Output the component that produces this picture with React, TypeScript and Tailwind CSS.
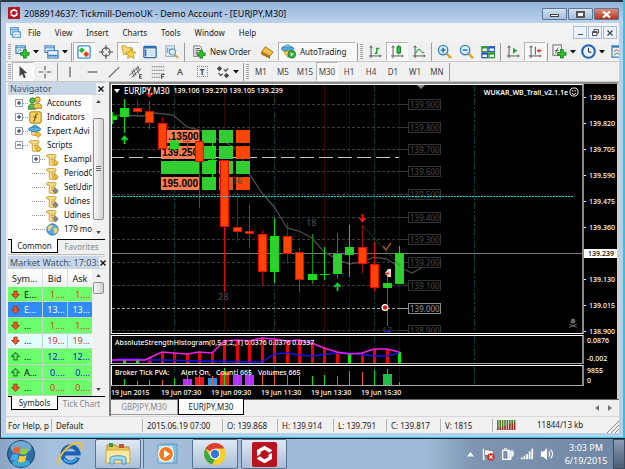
import React from "react";

type Kids = { children?: React.ReactNode };

/* ---------- icons ---------- */

function Ico({ children, size = 14 }: Kids & { size?: number }) {
  return (
    <svg width={size} height={size} viewBox="0 0 16 16" fill="none" className="shrink-0" aria-hidden="true">
      {children}
    </svg>
  );
}

const GreenPlus = ({ x, y }: { x: number; y: number }) => (
  <path d={`M${x + 3} ${y}h3v3h3v3h-3v3h-3v-3h-3v-3h3z`} fill="#2fc42f" stroke="#0c7d12" strokeWidth=".9" />
);

const NewChart = () => (
  <Ico size={15}><rect x="1" y="2" width="10" height="8" fill="#dff0fb" stroke="#3c86b8" strokeWidth="1.3" /><path d="M1 4h10M3 8l2-2 2 1" stroke="#3c86b8" /><GreenPlus x={6} y={6} /></Ico>
);
const Profiles = () => (
  <Ico size={15}><rect x="1" y="2" width="10" height="7" fill="#dbeafa" stroke="#4a83c0" strokeWidth="1.2" /><path d="M1 4h10" stroke="#4a83c0" /><rect x="4" y="7" width="11" height="8" fill="#e9f3fd" stroke="#4a83c0" strokeWidth="1.2" /><path d="M4 12.500h11" stroke="#4a83c0" strokeWidth="2" /></Ico>
);
const WatchIcon = () => (
  <Ico><rect x="1" y="1" width="14" height="14" rx="1.500" fill="#fff" stroke="#3f8fd0" strokeWidth="1.500" /><path d="M5.500 2.500L9 6 5.500 9.500 2 6z" fill="#2db533" /><path d="M10.500 7l3.500 3.500-3.500 3.500L7 10.500z" fill="#e2401f" /></Ico>
);
const Target = () => (
  <Ico><circle cx="8" cy="8" r="4.700" stroke="#555" strokeWidth="1.300" /><path d="M8 0v6M8 10v6M0 8h6M10 8h6" stroke="#555" strokeWidth="1.300" /></Ico>
);
const StarFolder = () => (
  <Ico size={15}><path d="M1 4V2h4l1 2h6v7H3z" fill="#f8db79" stroke="#c19a2b" /><path d="M10.500 5l1.700 3.500 3.800.4-2.800 2.600.8 3.800-3.500-1.900L7 15.300l.8-3.800L5 8.900l3.800-.4z" fill="#fcd53c" stroke="#b98d14" strokeWidth=".8" /></Ico>
);
const DataWin = () => (
  <Ico><rect x="1" y="1.500" width="14" height="13" rx="1" fill="#eaf4fe" stroke="#2b6fb5" strokeWidth="1.500" /><path d="M1 2h14v2H1z" fill="#2b6fb5" /><path d="M3 5v8" stroke="#3678c6" strokeWidth="2" /><path d="M6 6.500h7M6 9h7M6 11.500h7" stroke="#a9c7e4" /></Ico>
);
const Tester = () => (
  <Ico><rect x="1" y="1" width="10" height="12" fill="#eaf2fb" stroke="#7ba3cc" /><path d="M3 3v6M5 4v5M8 3v4" stroke="#5183b5" /><circle cx="8.500" cy="8" r="3.500" fill="#d8ecfa" stroke="#5c8fbd" strokeWidth="1.200" /><path d="M11 11l4 4" stroke="#d8a334" strokeWidth="2.200" /></Ico>
);
const OrderIcon = () => (
  <Ico><path d="M2 1h7l2 2v10H2z" fill="#f1f1f1" stroke="#6b6b6b" /><path d="M4 4h5M4 6h5M4 8h3M4 10h2" stroke="#555" /><GreenPlus x={6} y={6} /></Ico>
);
const Book = () => (
  <Ico><path d="M6 2l9 6-4 5-9-5z" fill="#eebf45" stroke="#a36d12" /><path d="M2 8l9 5v2L2 10.500z" fill="#c68a1e" stroke="#92620f" /></Ico>
);
const AutoIcon = () => (
  <Ico size={15}><ellipse cx="7" cy="5" rx="6.500" ry="2.600" fill="#55b2e6" stroke="#2572a8" /><path d="M3 4c1-4 7-4 8 0z" fill="#7cc6ef" stroke="#2572a8" strokeWidth=".8" /><path d="M3 8l4 6 5-3-1-4z" fill="#f4cc4f" stroke="#b5871b" strokeWidth=".8" /><circle cx="11.500" cy="11" r="4" fill="#37b53b" stroke="#167a1d" /><path d="M10.300 9v4l3.200-2z" fill="#fff" /></Ico>
);
const Axes = () => <path d="M3.500 1v14M1 12.500h14M2 3l1.500-2L5 3M13.500 11l1.500 1.500-1.500 1.500" stroke="#555" strokeWidth="1.100" />;
const BarsIcon = () => <Ico><Axes /><path d="M10 3v7M10 4h3M7.500 9.500H10" stroke="#1c9a28" strokeWidth="1.500" /></Ico>;
const CandleIcon = () => <Ico><Axes /><path d="M10 0v11" stroke="#118a1c" strokeWidth="1.200" /><rect x="8" y="2" width="4" height="7" fill="#2cc63a" stroke="#0c7a18" /></Ico>;
const LineIcon = () => <Ico><Axes /><path d="M4 10c2-6 5-6 6-3 1 2 3 2 4 2" stroke="#31a23b" strokeWidth="1.200" /></Ico>;
const Lens = ({ plus }: { plus?: boolean }) => (
  <Ico size={15}><path d="M10 10l5 5" stroke="#dba62f" strokeWidth="2.800" /><circle cx="6.500" cy="6.500" r="5" fill="#d9effc" stroke="#3a86c0" strokeWidth="1.500" /><path d={plus ? "M4 6.500h5M6.500 4v5" : "M4 6.500h5"} stroke="#24659a" strokeWidth="1.500" /></Ico>
);
const Tile = () => (
  <Ico><rect x="1" y="2" width="6.500" height="5.500" fill="#fff" stroke="#2b9a32" strokeWidth="1.500" /><rect x="9" y="2" width="6.500" height="5.500" fill="#fff" stroke="#2b58c8" strokeWidth="1.500" /><rect x="1" y="9" width="6.500" height="5.500" fill="#fff" stroke="#2b58c8" strokeWidth="1.500" /><rect x="9" y="9" width="6.500" height="5.500" fill="#fff" stroke="#2b9a32" strokeWidth="1.500" /><path d="M1 3h6.500M9 10h6.500" stroke="#2b9a32" strokeWidth="2" /><path d="M9 3h6.500M1 10h6.500" stroke="#2b58c8" strokeWidth="2" /></Ico>
);
const ScrollIcon = () => <Ico><Axes /><path d="M8 3v7l5-3.500z" fill="#25a52f" /></Ico>;
const ShiftIcon = () => <Ico><Axes /><path d="M8.500 2v9" stroke="#3679b8" strokeWidth="1.400" /><path d="M10 6.500L13 4v1.700h2.500v1.600H13V9z" fill="#d0401f" /></Ico>;
const IndIcon = () => <Ico size={15}><rect x="1" y="1" width="9" height="11" fill="#f3f3f3" stroke="#666" /><path d="M3 10c2 0 2-6 4-6M3 7h4" stroke="#555" /><GreenPlus x={6} y={6} /></Ico>;
const ClockIcon = () => <Ico size={15}><circle cx="8" cy="8" r="6.700" fill="#e7f3fd" stroke="#2766b4" strokeWidth="2.300" /><path d="M8 4v4.300l3 .7" stroke="#333" strokeWidth="1.200" /></Ico>;
const TplIcon = () => <Ico size={15}><rect x="1" y="2" width="13" height="12" fill="#eaf4fe" stroke="#3b80c0" strokeWidth="1.300" /><path d="M1 3h13" stroke="#3b80c0" strokeWidth="2" /><path d="M3 8l3-2 3 2" stroke="#c33" /><path d="M3 12l3-2 3 1" stroke="#292" /></Ico>;

const CursorIcon = () => <Ico><path d="M4 1v12l3-2.700 2 4.700 2.200-1-2-4.500H13z" fill="#444" /></Ico>;
const CrossIcon = () => <Ico><path d="M8 1v5M8 10v5M1 8h5M10 8h5" stroke="#555" strokeWidth="1.300" /><path d="M7.500 8h1" stroke="#555" /></Ico>;
const VLine = () => <Ico><path d="M8 2v12" stroke="#555" strokeWidth="1.300" /></Ico>;
const HLine = () => <Ico><path d="M3 8h11" stroke="#555" strokeWidth="1.300" /></Ico>;
const TLine = () => <Ico><path d="M2 14L14 2.500" stroke="#666" strokeWidth="1.300" /></Ico>;
const Channel = () => <Ico><path d="M0 12L11 2M3 14L14 4M3 6l3 8M5 4l3 8M8 3l3 7M10 1l2 6" stroke="#444" strokeWidth=".9" /><path d="M15 11h-3v4h3M12 13h2" stroke="#333" /></Ico>;
const Fibo = () => <Ico><path d="M1 2h14M1 6h14M1 10h14M1 14h9" stroke="#666" strokeWidth="1.200" strokeDasharray="1.500 1" /><path d="M12 16v-5h3.500M12 13.500h3" stroke="#333" /></Ico>;
const LetterA = () => <span className="text-[9px] font-semibold leading-none text-[#555]">A</span>;
const LetterT = () => <span className="flex h-[11px] w-[11px] items-center justify-center border border-dotted border-[#888] text-[8px] font-bold leading-none text-[#444]">T</span>;
const ArrowsIcon = () => <Ico><path d="M4 1l3 3-3 3-3-3zM12 9l3 3-3 3-3-3z" fill="#444" /><path d="M9 5l2 2 3-3M3 9l2 3 3-2" stroke="#444" strokeWidth="1.300" /></Ico>;

const Drop = () => <svg width="6" height="4" viewBox="0 0 6 4" aria-hidden="true"><path d="M0 0h6L3 3.500z" fill="#111" /></svg>;

/* ---------- toolbar parts ---------- */

const Grip = () => <span className="mx-[1px] h-[16px] w-[3px] shrink-0 bg-[repeating-linear-gradient(#a5a5a5_0_1px,#efefef_1px_2px)]" />;
const Sep = () => <span className="mx-[1px] h-[18px] w-px shrink-0 bg-[#9c9c9c]" />;

function Tool({ label, on, drop, children }: Kids & { label: string; on?: boolean; drop?: boolean }) {
  return (
    <button
      type="button"
      aria-label={label}
      className={`flex h-[19px] shrink-0 items-center justify-center gap-[3px] ${drop ? "w-[29px]" : "w-[22px]"} ${on ? "border border-[#b4b4b4] border-r-white border-b-white bg-[#f8f8f8]" : ""}`}
    >
      {children}
      {drop && <Drop />}
    </button>
  );
}

/* ---------- navigator ---------- */

const Scroll = ({ gray }: { gray?: boolean }) => (
  <Ico size={13}><path d="M2 2h9c2 0 2 3 0 3v8h3c0 2-1 2-2 2H5c-1 0-1-1-1-2V5H2C0 5 0 2 2 2z" fill="#fbe391" stroke="#b88b1f" /><path d="M6 6h4M6 8h4M6 10h3" stroke="#c69d3b" /><path d="M11.500 8.500L15 12l-3.500 3.500L8 12z" fill={gray ? "#8a8a8a" : "#f1bd2c"} stroke={gray ? "#5c5c5c" : "#a87912"} strokeWidth=".8" /></Ico>
);
const Accounts = () => (
  <Ico size={14}><circle cx="5" cy="5" r="3" fill="#58bd4d" stroke="#22791f" /><path d="M0 15c0-8 9-8 9 0z" fill="#58bd4d" stroke="#22791f" /><circle cx="11" cy="4" r="3" fill="#f2c64d" stroke="#9c741b" /><path d="M6 14c0-8 10-8 10 0z" fill="#f2c64d" stroke="#9c741b" /></Ico>
);
const Indicators = () => (
  <Ico size={13}><rect x="1" y="1" width="14" height="14" rx="2" fill="#f4d467" stroke="#b58d20" strokeWidth="1.400" /><path d="M11 4c-3-1-3 1-3.500 4S7 13 5 12M5.500 7.500h4.500" stroke="#6b4d06" strokeWidth="1.300" /></Ico>
);
const Expert = () => (
  <Ico size={14}><path d="M4 5c1-5 7-5 8 0z" fill="#7cc6ef" stroke="#2572a8" /><ellipse cx="7.500" cy="6" rx="7" ry="2.500" fill="#55b2e6" stroke="#2572a8" /><path d="M4 9h6v2c0 3-6 3-6 0z" fill="#f6d9a6" stroke="#a97d36" strokeWidth=".8" /><path d="M11.500 8.500L15 12l-3.500 3.500L8 12z" fill="#f1bd2c" stroke="#a87912" strokeWidth=".8" /></Ico>
);
const Globe = () => (
  <Ico size={13}><circle cx="8" cy="8" r="7" fill="#54a7ea" stroke="#2868a8" /><path d="M3 4c3-3 6-1 5 1S5 7 5 9s-3 0-3-2zM10 6c3-1 5 1 4 4s-4 4-4 1-2-3 0-5z" fill="#f3d569" /></Ico>
);

const tree: { label: string; icon: React.ReactNode; deep?: boolean; box?: string }[] = [
  { label: "Accounts", icon: <Accounts />, box: "+" },
  { label: "Indicators", icon: <Indicators />, box: "+" },
  { label: "Expert Advi", icon: <Expert />, box: "+" },
  { label: "Scripts", icon: <Scroll />, box: "-" },
  { label: "Exampl", icon: <Scroll />, deep: true, box: "+" },
  { label: "PeriodC", icon: <Scroll />, deep: true },
  { label: "SetUdin", icon: <Scroll gray />, deep: true },
  { label: "Udines", icon: <Scroll gray />, deep: true },
  { label: "Udines", icon: <Scroll gray />, deep: true },
  { label: "179 mo", icon: <Globe />, deep: true },
];

function PanelHead({ title }: { title: string }) {
  return (
    <div className="flex h-[13px] items-center justify-between bg-[#c9d6e6] pl-[2px] text-[9px] leading-[12px] text-[#46566e]">
      <h2 className="whitespace-nowrap">{title}</h2>
      <button type="button" aria-label={`Close ${title}`} className="flex h-[11px] w-[9px] shrink-0 items-center justify-center bg-[#f0f0f0]">
        <svg width="6" height="6" viewBox="0 0 6 6"><path d="M.5.5l5 5M5.500.5l-5 5" stroke="#111" strokeWidth="1.400" /></svg>
      </button>
    </div>
  );
}

function PanelTabs({ on, off }: { on: string; off: string }) {
  return (
    <div className="flex h-[15px] shrink-0 border-t border-black pl-[3px] text-[8px] leading-none">
      <button type="button" className="-mt-px h-[14px] w-[47px] border border-t-0 border-black bg-white text-[#222]">{on}</button>
      <button type="button" className="h-[13px] flex-1 whitespace-nowrap text-[#868686]">{off}</button>
    </div>
  );
}

function ScrollBar({ long }: { long?: boolean }) {
  return (
    <div className="flex w-[13px] shrink-0 flex-col items-center bg-[#f1f1f1]">
      <span className="flex h-[13px] items-center"><svg width="5" height="3" viewBox="0 0 6 4"><path d="M0 4h6L3 0z" fill="#444" /></svg></span>
      <span className={`flex w-[11px] items-center justify-center rounded-[2px] border border-[#8f8f8f] bg-gradient-to-r from-[#f7f7f7] to-[#d2d2d2] ${long ? "mt-[10px] h-[102px]" : "h-[12px]"}`}>
        {long && <span className="h-[6px] w-[5px] bg-[repeating-linear-gradient(#666_0_1px,#eee_1px_2px)]" />}
      </span>
      <span className="flex-1" />
      <span className="flex h-[13px] items-center"><svg width="5" height="3" viewBox="0 0 6 4"><path d="M0 0h6L3 4z" fill="#444" /></svg></span>
    </div>
  );
}

function Navigator() {
  return (
    <section className="flex flex-col border-b border-[#bdbdbd] bg-[#f0f0f0]">
      <PanelHead title="Navigator" />
      <div className="flex h-[144px] bg-white">
        <ul className="min-w-0 flex-1 overflow-hidden pl-[7px] pt-[1px] text-[8px] text-[#111]">
          {tree.map((n, i) => (
            <li key={i} className={`flex h-[14px] items-center whitespace-nowrap ${n.deep ? "pl-[17px]" : ""}`}>
              <span className="flex w-[13px] shrink-0 items-center">
                {n.box && (
                  <svg width="8" height="8" viewBox="0 0 8 8" fill="none" className="shrink-0">
                    <path d="M.5.5h7v7h-7z" fill="#fff" stroke="#8e9bb5" />
                    <path d={n.box === "+" ? "M2 4h4M4 2v4" : "M2 4h4"} stroke="#224" />
                  </svg>
                )}
                <span className="h-px flex-1 border-t border-dotted border-[#999]" />
              </span>
              <span className="flex w-[14px] shrink-0 justify-center">{n.icon}</span>
              <span className="ml-[5px]">{n.label}</span>
            </li>
          ))}
        </ul>
        <ScrollBar long />
      </div>
      <PanelTabs on="Common" off="Favorites" />
    </section>
  );
}

const quotes = [
  { s: "E...", b: "1....", up: false, row: "bg-[#6cff6c]", num: "text-[#e02a10]" },
  { s: "E...", b: "13...", up: false, row: "bg-[#2f8bf5] text-white", num: "text-white" },
  { s: "...", b: "1....", up: false, row: "bg-[#6cff6c]", num: "text-[#e02a10]" },
  { s: "...", b: "19...", up: false, row: "bg-[#e2ffff]", num: "text-[#e02a30]" },
  { s: "...", b: "12...", up: true, row: "bg-[#6cff6c]", num: "text-[#1414d8]" },
  { s: "A...", b: "0....", up: true, row: "bg-[#6cff6c]", num: "text-[#1414d8]" },
  { s: "...", b: "0....", up: false, row: "bg-[#6cff6c]", num: "text-[#e02a10]" },
];

function MarketWatch() {
  return (
    <section className="mt-[1px] flex min-h-0 flex-1 flex-col bg-[#f0f0f0]">
      <PanelHead title="Market Watch: 17:03:" />
      <div className="flex h-[127px] bg-white">
        <table className="h-full min-w-0 flex-1 table-fixed border-collapse text-[9px] leading-none">
          <thead>
            <tr className="h-[18px] bg-gradient-to-b from-white to-[#f1f1f1] text-[#222]">
              <th className="w-[34px] border-r border-[#ddd] pl-[4px] text-left font-normal">Sym...</th>
              <th className="border-r border-[#ddd] font-normal">Bid</th>
              <th className="font-normal">Ask</th>
            </tr>
          </thead>
          <tbody>
            {quotes.map((q, i) => (
              <tr key={i} className={`border-b border-[#bfd8bf] ${q.row}`}>
                <td className="border-r border-[#bfd8bf] pl-[3px]">
                  <span className="flex items-center gap-[4px]">
                    <Ico size={9}>
                      {q.up
                        ? <path d="M8 1l7 7h-4v6H5V8H1z" fill="#7de37d" stroke="#128a1c" strokeWidth="2" />
                        : <path d="M8 15L1 8h4V2h6v6h4z" fill="#ef5b2b" stroke="#a32a0c" strokeWidth="1.500" />}
                    </Ico>
                    {q.s}
                  </span>
                </td>
                <td className={`border-r border-[#bfd8bf] pr-[2px] text-right ${q.num}`}>{q.b}</td>
                <td className={`pr-[2px] text-right ${q.num}`}>{q.b}</td>
              </tr>
            ))}
          </tbody>
        </table>
        <ScrollBar />
      </div>
      <PanelTabs on="Symbols" off="Tick Chart" />
    </section>
  );
}

/* ---------- chart ---------- */

const GREEN = "#32cd32";
const LIME = "#00e600";
const ORANGE = "#ff4500";

/* centre x, wick top, wick bottom, body top, body bottom, rising, muted wick */
const candles: [number, number, number, number, number, boolean, boolean?][] = [
  [112, 112, 124, 116, 120, true],
  [124, 99, 133, 108, 117, true],
  [137, 99, 117, 108, 112, false, true],
  [149, 101, 129, 111, 123, false],
  [162, 117, 150, 123, 149, false, true],
  [174, 140, 150, 141, 149, true],
  [199, 130, 208, 141, 162, false],
  [212, 143, 180, 160, 161, true],
  [224, 160, 292, 160, 227, false],
  [237, 193, 241, 227, 232, false, true],
  [249, 205, 248, 231, 234, false],
  [262, 230, 285, 234, 272, false, true],
  [274, 218, 283, 236, 272, true],
  [287, 223, 262, 236, 254, false, true],
  [299, 248, 292, 252, 280, false],
  [312, 234, 284, 274, 280, true, true],
  [324, 247, 280, 274, 275, true],
  [337, 233, 279, 254, 274, true, true],
  [349, 225, 277, 247, 255, true],
  [362, 225, 273, 247, 264, false, true],
  [374, 242, 292, 264, 288, false],
  [387, 270, 326, 283, 288, true, true],
  [399, 246, 284, 253, 284, true],
];

const levels: [number, string][] = [
  [104, "139.900"], [127, "139.800"], [149, "139.700"], [171, "139.600"], [194, "139.500"],
  [217, "139.400"], [239, "139.300"], [262, "139.200"], [285, "139.100"], [308, "139.000"], [330, "138.900"],
];

const cellRows = [130, 146, 161, 177];
const cells: [number, number, string][] = [
  [0, 0, GREEN], [0, 1, GREEN], [0, 2, GREEN], [0, 3, GREEN],
  [1, 0, GREEN], [1, 1, GREEN], [1, 2, GREEN], [1, 3, "#c8641c"],
  [2, 0, ORANGE], [2, 1, ORANGE], [2, 2, GREEN], [2, 3, ORANGE],
];

function Grid({ top, bottom }: { top: number; bottom: number }) {
  return (
    <g shapeRendering="crispEdges">
      {[199, 224, 249, 299, 324, 349, 399].map((x) => <path key={x} d={`M${x}.5 ${top}V${bottom}`} stroke="#340505" />)}
      {[174, 274, 374, 474].map((x) => <path key={x} d={`M${x}.5 ${top}V${bottom}`} stroke="#073b3b" strokeDasharray="7 2 2 2" />)}
    </g>
  );
}

const upArrow = (x: number, y: number) => <path d={`M${x} ${y + 8}V${y}M${x - 3} ${y + 4}l3-3.500 3 3.500`} stroke="#00e632" strokeWidth="1.700" />;
const downArrow = (x: number, y: number) => <path d={`M${x} ${y}v8M${x - 3} ${y + 4}l3 3.500 3-3.500`} stroke="#f01818" strokeWidth="1.700" />;

function PricePlot() {
  return (
    <svg className="block h-full w-full" fill="none" role="img" aria-label="EURJPY M30 candlesticks">
      <g transform="translate(-112 -85)">
        <Grid top={85} bottom={332} />
        <g shapeRendering="crispEdges">
          {levels.map(([y]) => (
            <g key={y}>
              <path d={`M112 ${y}.5H399`} stroke={y === 308 ? "#9a9a9a" : "#3c3c3c"} strokeDasharray="3 2" />
              <path d={`M399 ${y}.5H408`} stroke={y === 308 ? "#9a9a9a" : "#333"} />
            </g>
          ))}
          <path d="M110 157.500H399" stroke="#c8c8c8" strokeDasharray="14 5" />
          <path d="M112 253.500H3000" stroke="#77777f" />
        </g>
        <path d="M417 85h8l-4 4z" fill="#8a8a8a" />
        <path d="M112 115L143 116 155 113 173 115 187 127 199 130 212 137 225 142 238 150 250 175 262 193 275 208 287 228 299 231 312 238 324 252 337 259 349 264 362 262 374 257 387 259 399 267 412 273 423 267" stroke="#4c4c4c" strokeWidth="1.300" />

        <g fontFamily="Liberation Sans, Arial, sans-serif" fontWeight="700" fontSize="10">
          {cellRows.map((y, r) => (
            <rect key={y} x="161" y={y} width="38" height="13" fill={r === 2 ? GREEN : "#ff7f50"} />
          ))}
          <text x="168" y="140" fill="#000">.13500</text>
          <text x="162" y="156" fill="#000">139.250</text>
          <text x="162" y="187" fill="#000">195.000</text>
          {cells.map(([c, r, f]) => (
            <rect key={`${c}${r}`} x={202 + c * 17} y={cellRows[r]} width="14" height="13" fill={f} />
          ))}
        </g>
        <path d="M187.500 137v14M183 141.500h8" stroke="#d23a12" />

        <g shapeRendering="crispEdges">
          {candles.map(([x, wt, wb, t, b, up, muted]) => (
            <g key={x}>
              <rect x={x} y={wt} width="1" height={wb - wt} fill={up ? (muted ? "#079607" : LIME) : muted ? "#a00808" : "#e60a0a"} />
              <rect x={x - 4} y={t} width="9" height={b - t} fill={up ? LIME : "#e60a0a"} />
              {b - t > 2 && <rect x={x - 3} y={t + 1} width="7" height={b - t - 2} fill={up ? GREEN : ORANGE} />}
            </g>
          ))}
        </g>

        {downArrow(149.5, 89)}
        {upArrow(124.5, 136)}
        {downArrow(362.5, 214)}
        {upArrow(337.5, 283)}
        <path d="M363 226L400 266" stroke="#116a18" strokeDasharray="2 1" />
        <path d="M383 246l3 4 5-7" stroke="#a9521c" strokeWidth="1.300" />
        <path d="M391 269v8h-3l-3-4 3-4z" fill="#f2ddc2" /><path d="M385 273.500h4" stroke="#e33" strokeWidth="2" />
        <circle cx="385" cy="307.500" r="3.500" fill="#fff" /><circle cx="385" cy="307.500" r="2.200" fill="#e01818" />
        <path d="M384 331.500h7" stroke="#1717c8" strokeWidth="2" />

        <g fontFamily="Noto Sans, sans-serif" fontSize="9" fill="#4a4a4a">
          <text x="232" y="184">16</text>
          <text x="218" y="300">28</text>
          <text x="306" y="226">18</text>
          <text x="382" y="334" fill="#333">17</text>
        </g>
        <g fontFamily="Noto Sans, sans-serif" fontSize="8">
          {levels.map(([y, t]) => (
            <g key={t}>
              <rect x="408.500" y={y - 4.5} width="32" height="10" fill="#000" stroke={y === 308 ? "#8a8a8a" : "#333"} />
              <text x="410" y={y + 4} fill={y === 308 ? "#8a8a8a" : "#404040"}>{t}</text>
            </g>
          ))}
        </g>
        <path d="M112 196.500H574" stroke="#00dce6" strokeDasharray="2 1" shapeRendering="crispEdges" />
      </g>
    </svg>
  );
}

const strength = [359, 359, 357, 351, 352, 353, 351, 352, 340, 339, 340, 337, 338, 340, 339, 342, 347, 351, 353, 352, 348, 348, 351];

function StrengthPlot() {
  return (
    <svg className="block h-full w-full" fill="none" role="img" aria-label="Absolute strength histogram">
      <g transform="translate(-112 -335)">
        <Grid top={335} bottom={362} />
        <g shapeRendering="crispEdges">
          {strength.map((y, i) => (
            <rect key={i} x={123 + Math.round(i * 12.5)} y={y} width="3" height={362 - y} fill={[0, 1, 18, 22].includes(i) ? "#00f000" : "#f00000"} />
          ))}
        </g>
        <path d="M112 360L118 358 137 358 149 359 162 359 199 360 262 361 274 353 287 352 299 354 312 355 337 352 349 352 374 355 387 355 399 352" stroke="#1414f0" strokeWidth="1.500" />
        <path d="M112 359H145L149 357 162 351 174 352 187 353 199 351 212 352 224 340 237 339 249 340 262 337 274 338 287 340 299 339 312 342 324 347 337 351 349 353 362 352 374 348 387 348 399 351" stroke="#f020e8" strokeWidth="1.600" />
        <text x="115" y="344" fontFamily="Noto Sans, sans-serif" fontSize="7" fontWeight="500" fill="#fff">AbsoluteStrengthHistogram(0,5,3,2,,1) 0.0376 0.0376 0.0337</text>
      </g>
    </svg>
  );
}

const VIOLET = "#b030ff";
/* top of the thin bar, rising, then top and colour of the wide bar */
const volumes: [number, boolean, number?, string?][] = [
  [378, true], [380, false], [379, true], [379, false], [377, true],
  [374, true, 378, VIOLET], [374, false, 376, "#f01414"], [375, false, 377, "#1e90ff"], [367, true, 371, "#f01414"],
  [368, false, 374, VIOLET], [368, false, 374, VIOLET], [372, false], [370, false], [374, false], [375, false],
  [375, true], [374, true], [375, false], [370, true], [371, false], [369, true], [368, true, 373, "#22b84a"], [381, false],
];

function VolumePlot() {
  return (
    <svg className="block h-full w-full" fill="none" role="img" aria-label="Tick volumes">
      <g transform="translate(-112 -365)">
        <Grid top={365} bottom={384} />
        <g shapeRendering="crispEdges">
          {volumes.map(([y, up, wy, wf], i) => {
            const x = 124 + Math.round(i * 12.5);
            return (
              <g key={i}>
                {wy && <rect x={x - 4} y={wy} width="9" height={384 - wy} fill={wf} />}
                <rect x={x} y={y} width="1" height={384 - y} fill={up ? LIME : "#f05a10"} />
              </g>
            );
          })}
        </g>
        <g fontFamily="Noto Sans, sans-serif" fontSize="7" fontWeight="500" fill="#fff">
          <text x="115" y="374">Broker Tick PVA:</text>
          <text x="181" y="374">Alert On,</text>
          <text x="216" y="374">Count: 665</text>
          <text x="258" y="374">Volumes 665</text>
        </g>
      </g>
    </svg>
  );
}

const prices = ["139.935", "139.820", "139.705", "139.590", "139.475", "139.360", "139.239", "139.130", "139.015", "138.900"];
const times = ["19 Jun 2015", "19 Jun 07:30", "19 Jun 09:30", "19 Jun 11:30", "19 Jun 13:30", "19 Jun 15:30"];

function Chart() {
  return (
    <div className="flex flex-1 flex-col bg-black text-[7px] font-medium leading-none text-white">
      <div className="flex h-[249px] flex-1">
        <div className="relative min-w-0 flex-1 border-t border-r-2 border-b border-l border-white border-r-[#8a8a8a]">
          <div className="absolute inset-0"><PricePlot /></div>
          <div className="absolute left-[2px] top-[1px] flex items-center gap-[4px] text-[8px] leading-[10px]">
            <svg width="6" height="4" viewBox="0 0 6 4"><path d="M0 0h6L3 4z" fill="#fff" /></svg>
            <span>EURJPY,M30</span>
            <span className="whitespace-pre text-[7px]">139.106 139.270 139.105 139.239</span>
          </div>
          <div className="absolute right-[3px] top-[2px] flex items-center gap-[1px] font-semibold leading-[9px]">
            <span>WUKAR_WB_Trail_v2.1.1e</span>
            <Ico size={10}><circle cx="8" cy="8" r="6.500" stroke="#fff" strokeWidth="1.500" /><path d="M4.500 9.500c2 3 5 3 7 0" stroke="#fff" strokeWidth="1.500" /><path d="M6 5v2M10 5v2" stroke="#fff" strokeWidth="1.800" /></Ico>
          </div>
          <div className="absolute bottom-[5px] right-[4px]">
            <Ico size={10}><circle cx="8" cy="5" r="3.700" fill="#777" /><path d="M7 5h-1M10 5h-1" stroke="#111" strokeWidth="1.600" /><path d="M2 10l12 5M14 10L2 15" stroke="#777" strokeWidth="1.500" /></Ico>
          </div>
        </div>
        <ol className="h-0 w-[33px] shrink-0">
          {prices.map((p) => (
            <li key={p} className="flex h-[26px] items-center">
              {p === "139.239"
                ? <span className="w-full bg-white py-[1px] pl-[4px] text-black">{p}</span>
                : <><span className="mr-[3px] h-px w-[2px] bg-white" />{p}</>}
            </li>
          ))}
        </ol>
      </div>
      <div className="mt-[1px] flex h-[29px]">
        <div className="min-w-0 flex-1 border-t border-b border-l border-r-2 border-white border-r-[#8a8a8a] border-b-[#aaa]"><StrengthPlot /></div>
        <div className="flex w-[33px] shrink-0 flex-col justify-between py-[2px] pl-[3px]"><span>0.0876</span><span>-0.002</span></div>
      </div>
      <div className="mt-[1px] flex h-[21px]">
        <div className="min-w-0 flex-1 border-t border-b border-l border-r-2 border-white border-r-[#8a8a8a] border-b-[#aaa]"><VolumePlot /></div>
        <div className="flex w-[33px] shrink-0 flex-col justify-between py-[2px] pl-[3px]"><span>9855</span><span>0</span></div>
      </div>
      <div className="flex h-[13px] items-center">
        {times.map((t) => <span key={t} className="w-[50px] whitespace-nowrap">{t}</span>)}
      </div>
    </div>
  );
}

/* ---------- shell ---------- */

const TitleLogo = ({ size }: { size: number }) => (
  <svg width={size} height={size} viewBox="0 0 24 24" fill="none" aria-hidden="true" className="shrink-0">
    <rect width="24" height="24" rx="2" fill="#b8131f" />
    <path d="M12 5.500l5.500 3.200v6.600L12 18.500l-5.500-3.200V8.700z" stroke="#fff" strokeWidth="3.400" />
    <path d="M4 15l6-3.500M14 12.500L20 9" stroke="#b8131f" strokeWidth="1.600" />
  </svg>
);

function TitleBar() {
  const btn = "flex h-[12px] items-center justify-center rounded-[1px] border border-[#5f748f]";
  return (
    <header className="flex h-[23px] items-center border-t-2 border-[#2b3440] bg-gradient-to-b from-[#93b4da] to-[#bdd2ea] pl-[7px] pr-[4px] text-[9px] text-[#0a0a14]">
      <TitleLogo size={12} />
      <h1 className="ml-[4px] mt-[3px] flex-1 whitespace-nowrap">2088914637: Tickmill-DemoUK - Demo Account - [EURJPY,M30]</h1>
      <div className="flex gap-[1px] pt-[3px]">
        <button type="button" aria-label="Minimize" className={`${btn} w-[25px] bg-gradient-to-b from-[#d3e2f3] to-[#a3bedd]`}><span className="mt-[3px] h-[3px] w-[9px] border border-[#444] bg-white" /></button>
        <button type="button" aria-label="Maximize" className={`${btn} w-[25px] bg-gradient-to-b from-[#d3e2f3] to-[#a3bedd]`}><span className="h-[7px] w-[9px] border-2 border-[#555] bg-white" /></button>
        <button type="button" aria-label="Close" className={`${btn} w-[25px] bg-gradient-to-b from-[#dd8a78] to-[#b8301c]`}>
          <svg width="9" height="7" viewBox="0 0 9 7"><path d="M1 .5l7 6M8 .5l-7 6" stroke="#fff" strokeWidth="2.200" /></svg>
        </button>
      </div>
    </header>
  );
}

function MenuBar() {
  const mdi = "flex h-[13px] w-[14px] items-center justify-center border border-[#a9bcd3] bg-[#edf3fa]";
  return (
    <nav className="flex h-[19px] items-center bg-[#f3f3f3] pl-[4px] pr-[2px] text-[8px] text-[#222]">
      <Ico size={11}><rect x="1" y="1" width="11" height="10" fill="#e4f1fc" stroke="#3f8ace" strokeWidth="1.500" /><path d="M1 4h11" stroke="#3f8ace" strokeWidth="1.500" /><rect x="4" y="7" width="11" height="8" fill="#fff" stroke="#3f8ace" strokeWidth="1.500" /><path d="M6 13l3-3 2 2 3-3" stroke="#3f8ace" /></Ico>
      {["File", "View", "Insert", "Charts", "Tools", "Window", "Help"].map((m) => (
        <button key={m} type="button" className="px-[7px]">{m}</button>
      ))}
      <span className="flex-1" />
      <div className="flex gap-[1px]">
        <button type="button" aria-label="Minimize chart" className={mdi}><span className="mt-[4px] h-px w-[5px] bg-[#455]" /></button>
        <button type="button" aria-label="Restore chart" className={mdi}><svg width="7" height="7" viewBox="0 0 7 7" fill="none"><path d="M2 2V.5h4.500V4H5M.5 2.500H5v4H.5zM.5 3.500H5" stroke="#555" /></svg></button>
        <button type="button" aria-label="Close chart" className={mdi}><svg width="6" height="6" viewBox="0 0 6 6"><path d="M.5.5l5 5M5.500.5l-5 5" stroke="#444" strokeWidth="1.300" /></svg></button>
      </div>
    </nav>
  );
}

function MainTools() {
  return (
    <div className="flex h-[20px] items-center overflow-hidden border-b border-[#c8c8c8] bg-[#f0f0f0] pl-[1px] text-[8px] text-[#222]" role="toolbar" aria-label="Standard">
      <Grip />
      <Tool label="New chart" drop><NewChart /></Tool>
      <Tool label="Profiles" drop><Profiles /></Tool>
      <Sep />
      <Tool label="Market watch" on><WatchIcon /></Tool>
      <Tool label="Data window"><Target /></Tool>
      <Tool label="Navigator" on><StarFolder /></Tool>
      <Tool label="Terminal"><DataWin /></Tool>
      <Tool label="Strategy tester"><Tester /></Tool>
      <Sep />
      <button type="button" className="flex h-[19px] w-[70px] shrink-0 items-center gap-[4px] whitespace-nowrap pl-[6px]"><OrderIcon />New Order</button>
      <Tool label="MetaEditor"><Book /></Tool>
      <button type="button" className="flex h-[19px] w-[78px] shrink-0 items-center gap-[4px] border border-[#b4b4b4] border-b-white border-r-white bg-[#f8f8f8] pl-[2px]"><AutoIcon />AutoTrading</button>
      <Sep />
      <Grip />
      <Tool label="Bar chart"><BarsIcon /></Tool>
      <Tool label="Candlesticks" on><CandleIcon /></Tool>
      <Tool label="Line chart"><LineIcon /></Tool>
      <Sep />
      <Tool label="Zoom in"><Lens plus /></Tool>
      <Tool label="Zoom out"><Lens /></Tool>
      <Tool label="Tile windows"><Tile /></Tool>
      <Sep />
      <Tool label="Auto scroll"><ScrollIcon /></Tool>
      <Tool label="Chart shift" on><ShiftIcon /></Tool>
      <Sep />
      <Tool label="Indicators" drop><IndIcon /></Tool>
      <Tool label="Periods" drop><ClockIcon /></Tool>
      <Tool label="Templates"><TplIcon /></Tool>
    </div>
  );
}

function LineTools() {
  return (
    <div className="flex h-[20px] items-center overflow-hidden border-b border-[#c8c8c8] bg-[#f0f0f0] pl-[1px] text-[8px] text-[#444]" role="toolbar" aria-label="Line studies and periods">
      <Grip />
      <Tool label="Cursor" on><CursorIcon /></Tool>
      <Tool label="Crosshair"><CrossIcon /></Tool>
      <Sep />
      <Tool label="Vertical line"><VLine /></Tool>
      <Tool label="Horizontal line"><HLine /></Tool>
      <Tool label="Trendline"><TLine /></Tool>
      <Tool label="Channel"><Channel /></Tool>
      <Tool label="Fibonacci"><Fibo /></Tool>
      <Tool label="Text"><LetterA /></Tool>
      <Tool label="Text label"><LetterT /></Tool>
      <Tool label="Arrows" drop><ArrowsIcon /></Tool>
      <Sep />
      <Grip />
      {["M1", "M5", "M15", "M30", "H1", "H4", "D1", "W1", "MN"].map((t) => (
        <Tool key={t} label={t} on={t === "M30"}>{t}</Tool>
      ))}
      <Sep />
    </div>
  );
}

function ChartTabs() {
  return (
    <div className="flex h-[17px] shrink-0 items-start border-t border-[#666] bg-[#f0f0f0] text-[8px]">
      <button type="button" className="h-[15px] w-[67px] border-b border-r border-[#999] text-[#888]">GBPJPY,M30</button>
      <button type="button" className="-mt-px h-[16px] w-[66px] border border-t-0 border-black bg-white text-[#222]">EURJPY,M30</button>
      <span className="flex-1" />
      <div className="flex h-[16px] items-center gap-[9px] pr-[7px]">
        <button type="button" aria-label="Previous tab"><svg width="4" height="6" viewBox="0 0 4 6"><path d="M4 0v6L0 3z" fill="#777" /></svg></button>
        <button type="button" aria-label="Next tab"><svg width="4" height="6" viewBox="0 0 4 6"><path d="M0 0v6l4-3z" fill="#777" /></svg></button>
      </div>
    </div>
  );
}

function StatusBar() {
  const cell = "h-[13px] shrink-0 whitespace-nowrap border-r border-[#b5b5b5] leading-[13px]";
  return (
    <footer className="flex h-[17px] shrink-0 items-center border-t border-[#d8d8d8] bg-[#f1f1f1] pl-[2px] text-[8px] text-[#1c1c1c]">
      <span className={`${cell} w-[44px]`}>For Help, p</span>
      <span className={`${cell} w-[91px] pl-[4px]`}>Default</span>
      <span className={`${cell} w-[80px] pl-[4px]`}>2015.06.19 07:00</span>
      <span className={`${cell} w-[55px] pl-[4px]`}>O: 139.868</span>
      <span className={`${cell} w-[56px] pl-[4px]`}>H: 139.914</span>
      <span className={`${cell} w-[53px] pl-[4px]`}>L: 139.791</span>
      <span className={`${cell} w-[54px] pl-[4px]`}>C: 139.817</span>
      <span className={`${cell} w-[52px] pl-[4px]`}>V: 1815</span>
      <svg width="19" height="10" viewBox="0 0 19 10" className="ml-[4px] shrink-0" aria-hidden="true">
        {[0, 1, 2, 3, 4, 5, 6, 7].map((i) => (
          <g key={i}><rect x={i * 2.4} y="0" width="1.600" height={9 - i * 0.8} fill="#4f7d2c" /><rect x={i * 2.4} y={8.5 - i * 0.8} width="1.600" height={1.5 + i * 0.8} fill="#a32424" /></g>
        ))}
      </svg>
      <span className="min-w-0 flex-1 whitespace-nowrap pl-[21px]">11844/13 kb</span>
      <svg width="12" height="12" viewBox="0 0 12 12" className="shrink-0 self-end" aria-hidden="true"><path d="M0 12L12 0M4 12l8-8M8 12l4-4" stroke="#888" /></svg>
    </footer>
  );
}

function Taskbar() {
  const open = "flex h-[30px] w-[46px] shrink-0 items-center justify-center rounded-[2px] border border-[#56708f] bg-gradient-to-b from-[#dfe9f4] to-[#a9bfd8]";
  return (
    <div className="flex h-[31px] shrink-0 items-center overflow-hidden border-t border-[#1d2733] bg-[linear-gradient(90deg,#8aa5c6_0,#a5bfdc_8%,#9fb9d8_50%,#a0bad9_68%,#7d95b1_76%,#6f87a4_100%)]">
      <button type="button" aria-label="Start" className="ml-[6px] shrink-0">
        <svg width="30" height="30" viewBox="0 0 30 30" fill="none">
          <circle cx="15" cy="15" r="13.500" fill="#2f6ea8" stroke="#1e4260" /><ellipse cx="15" cy="8.500" rx="10.500" ry="6.500" fill="#8fbfe2" opacity=".7" /><ellipse cx="15" cy="24" rx="9" ry="4" fill="#3fc1ee" opacity=".7" />
          <path d="M8 9c2-2 4-1.500 6.500-.5L13 14.500C11 13.500 9 13 6.500 14z" fill="#f0642b" /><path d="M15.500 9c2 1 4 1.500 7-.5l-1.500 6c-2.500 1.500-4.500 1.500-7 .5z" fill="#8fcf3c" /><path d="M6 15.500c2.500-1 4.500-.5 6.500.5L11 22c-2-1-4-1.500-6.500-.5z" fill="#4aa9ec" /><path d="M13.500 16.500c2.500 1 4.500 1 7-.5l-1.500 6c-3 2-5 1.500-7 .5z" fill="#fccb31" />
        </svg>
      </button>
      <button type="button" aria-label="Internet Explorer" className="ml-[20px] shrink-0">
        <svg width="28" height="26" viewBox="0 0 28 26" fill="none"><path d="M22 16.500A8 8 0 1 1 22.500 12.500H8" stroke="#1a62b5" strokeWidth="4.200" /><path d="M21 16.500A7.500 7.500 0 0 1 8 18" stroke="#4bb3ef" strokeWidth="1.500" /><path d="M4 24C-2 20 12 2 22 2c5 0 4 4 2 7" stroke="#f2c02e" strokeWidth="2" /></svg>
      </button>
      <button type="button" aria-label="Explorer" className={`${open} ml-[11px]`}>
        <svg width="26" height="24" viewBox="0 0 26 24"><path d="M2 3h9l2 2h11v14H2z" fill="#e9c659" stroke="#b28b2b" /><path d="M4 1h4v4H4z" fill="#3b9b44" /><path d="M14 2h5v4h-5z" fill="#d44c31" /><path d="M1 8h24v13H1z" fill="#fbe9a0" stroke="#cba646" /><path d="M5 22v-6c0-3 16-3 16 0v6h-4v-4H9v4z" fill="#a6d8f3" stroke="#4796c5" /></svg>
      </button>
      <span className="h-[30px] w-[3px] rounded-r-[2px] border-r border-[#56708f] bg-[#b9cbe0]" />
      <button type="button" aria-label="Media Player" className="ml-[12px] shrink-0">
        <svg width="24" height="24" viewBox="0 0 24 24"><path d="M5 2h16v19H5z" fill="#8cc3e4" stroke="#5c97bd" /><path d="M2 3h16v18H2z" fill="#b8dff3" stroke="#63a2c8" /><circle cx="10" cy="12" r="7.500" fill="#f27a1c" stroke="#fff" strokeWidth="1.200" /><path d="M8 8v8l6-4z" fill="#fff" /></svg>
      </button>
      <button type="button" aria-label="Chrome" className={`${open} ml-[12px]`}>
        <svg width="24" height="24" viewBox="0 0 24 24"><circle cx="12" cy="12" r="11" fill="#f8cf2c" /><path d="M12 12L2.500 6.500A11 11 0 0 1 21.500 6.500H12z" fill="#dd4032" /><path d="M2.500 6.500L7.500 15l4.500 2.500-3 5A11 11 0 0 1 2.500 6.500z" fill="#3fa648" /><circle cx="12" cy="12" r="5.300" fill="#fff" /><circle cx="12" cy="12" r="4.200" fill="#3577d4" /></svg>
      </button>
      <button type="button" aria-label="MetaTrader" className={`${open} ml-[3px]`}><TitleLogo size={25} /></button>
      <span className="min-w-0 flex-1" />
      <div className="flex shrink-0 items-center gap-[6px] text-white">
        <svg width="7" height="5" viewBox="0 0 7 5" className="mr-[2px]"><path d="M0 4.500h7L3.500 0z" fill="#f4f4f4" /></svg>
        <Ico size={13}><path d="M2 1v14" stroke="#fff" strokeWidth="2" /><path d="M3 2h5l1 1h5v7H9L8 9H3z" fill="#eef2f6" stroke="#555" strokeWidth=".7" /><circle cx="11" cy="11" r="4.500" fill="#d62c22" /><path d="M9 9l4 4M13 9l-4 4" stroke="#fff" strokeWidth="1.500" /></Ico>
        <Ico size={13}><path d="M2 3h7v11H2zM4 1h3" stroke="#fff" strokeWidth="1.600" /><path d="M9 5h6v3c0 3-6 3-6 0zM12 10v4H7M10.500 2v3M13.500 2v3" stroke="#fff" strokeWidth="1.500" fill="#e6e6e6" /></Ico>
        <Ico size={14}><path d="M2 14v-2M5 14v-4M8 14V8M11 14V5M14 14V2" stroke="#fff" strokeWidth="2" /></Ico>
        <Ico size={14}><path d="M1 5h3l4-4v14l-4-4H1z" fill="#fff" /><path d="M10 5c1.500 2 1.500 4 0 6M12 3c3 3 3 7 0 10" stroke="#fff" strokeWidth="1.300" /></Ico>
      </div>
      <div className="ml-[9px] w-[46px] shrink-0 text-center text-[9px] leading-[13px] text-white"><div>3:03 PM</div><div>6/19/2015</div></div>
      <button type="button" aria-label="Show desktop" className="ml-[4px] h-[30px] w-[12px] shrink-0 border border-[#3c4c60] bg-gradient-to-b from-[#8b9db4] to-[#4b5d74]" />
    </div>
  );
}

export default function App() {
  return (
    <div className="flex min-h-screen w-full flex-col bg-[#b7cfea] font-['Noto_Sans','Open_Sans',sans-serif]">
      <div className="flex flex-1 flex-col border-l border-r-2 border-l-[#40505f] border-r-[#22c8e4]">
        <TitleBar />
        <main className="mx-[5px] mr-[4px] flex flex-1 flex-col bg-[#f0f0f0]">
          <MenuBar />
          <MainTools />
          <LineTools />
          <div className="flex flex-1">
            <aside className="flex w-[99px] shrink-0 flex-col pl-[2px]">
              <Navigator />
              <MarketWatch />
            </aside>
            <section className="ml-[4px] flex min-w-0 flex-1 flex-col border-l-2 border-[#777]">
              <div className="flex flex-1 flex-col border-r-2 border-t-2 border-[#d0d0d0] border-t-[#8c8c8c]"><Chart /></div>
              <ChartTabs />
            </section>
          </div>
          <StatusBar />
        </main>
        <div className="h-[5px] border-b border-[#22c8e4]" />
      </div>
      <Taskbar />
    </div>
  );
}
